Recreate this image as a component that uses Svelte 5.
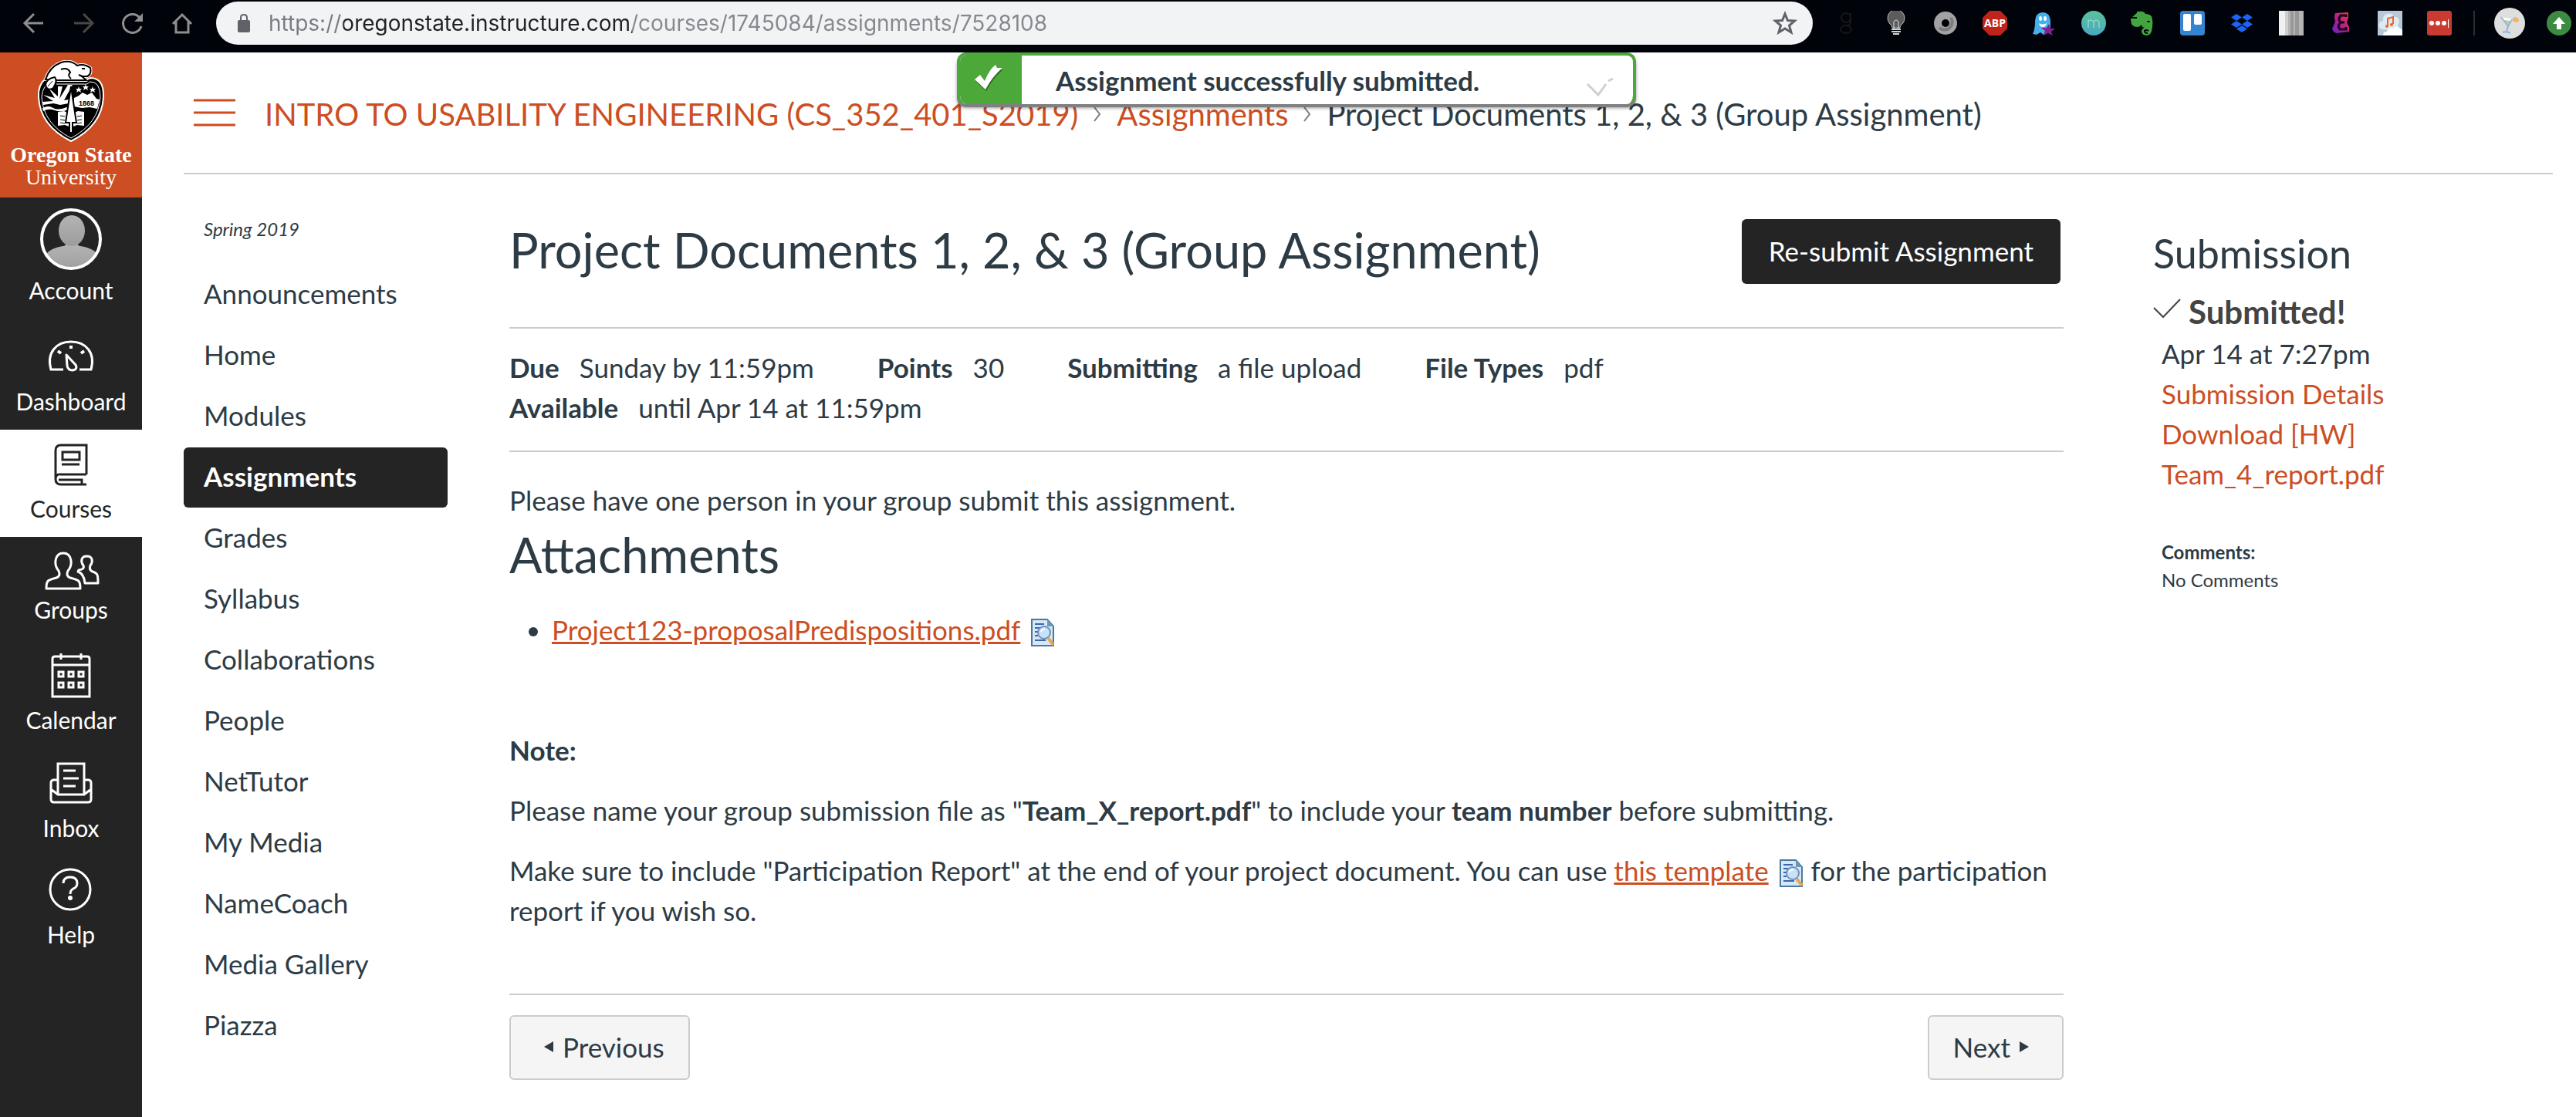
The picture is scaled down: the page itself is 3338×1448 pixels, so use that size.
<script>
  const rail = [
    { key: 'account', label: 'Account', height: 103 },
    { key: 'dashboard', label: 'Dashboard', height: 90 },
    { key: 'courses', label: 'Courses', height: 85, active: true },
    { key: 'groups', label: 'Groups', height: 77 },
    { key: 'calendar', label: 'Calendar', height: 89 },
    { key: 'inbox', label: 'Inbox', height: 86 },
    { key: 'help', label: 'Help', height: 84 }
  ];

  const courseLinks = [
    'Announcements', 'Home', 'Modules', 'Assignments', 'Grades', 'Syllabus', 'Collaborations',
    'People', 'NetTutor', 'My Media', 'NameCoach', 'Media Gallery', 'Piazza'
  ];

  const details = [
    ['Due', 'Sunday by 11:59pm'],
    ['Points', '30'],
    ['Submitting', 'a file upload'],
    ['File Types', 'pdf'],
    ['Available', 'until Apr 14 at 11:59pm']
  ];

  const extensions = [
    'goodreads', 'bulb', 'ring', 'abp', 'ghost', 'mendeley', 'elephant',
    'board', 'dropbox', 'bars', 'letter', 'cloud', 'dots'
  ];

  let url = $state('https://oregonstate.instructure.com/courses/1745084/assignments/7528108');
</script>

{#snippet railIcon(item)}
  <svg width="184" height={item.height} viewBox="0 0 184 {item.height}" fill="none" stroke="currentColor" stroke-width="3" aria-hidden="true">
    {#if item.key === 'account'}
      <defs>
        <clipPath id="avatar"><circle cx="92" cy="54" r="37" /></clipPath>
        <linearGradient id="avatar-fill" x1="0" y1="0" x2="0" y2="1">
          <stop offset="0" stop-color="#b4b4b4" /><stop offset="1" stop-color="#9c9c9c" />
        </linearGradient>
      </defs>
      <g clip-path="url(#avatar)" stroke="none" fill="url(#avatar-fill)">
        <path d="M60 100V74q4-8 22-11q4-1 4-4h14q0 3 4 4q18 3 22 11v26z" />
        <ellipse cx="93" cy="43" rx="17" ry="20" />
      </g>
      <circle cx="92" cy="54" r="38" stroke-width="4" />
    {:else if item.key === 'dashboard'}
      <path d="M82 66H66C60 44 73 30 92 30s32 14 26 36h-15" />
      <path d="M86 47l12 13q3 6-4 7q-6 0-7-6z" stroke-linejoin="round" />
      <path d="M92 35v4M75 42l4 3M109 42l-4 3" stroke-width="4" />
    {:else if item.key === 'courses'}
      <path d="M112 58V20H79q-7 0-7 7v36M112 71H79q-7 0-7-7t7-6h33M76 65h30v5" />
      <path d="M81 29h22v10H81zM80 45h23" />
    {:else if item.key === 'groups'}
      <path d="M60 67c0-10 1-11 13-14q6-2 3-9c-7-8-5-23 6-23s13 15 6 23q-3 7 3 9c12 3 13 4 13 14z" stroke-linejoin="round" />
      <path d="M102 43q8-1 6-6c-4-5-3-12 4.500-12s8.500 7 4.500 12q-2 6 3 8c7 2 7 5 7 15h-17q-1-12-9-15z" stroke-linejoin="round" />
    {:else if item.key === 'calendar'}
      <path d="M68 76V27q0-3 3-3h42q3 0 3 3v49zM68 35h48M79 20v8M105 20v8" />
      <path d="M76 44h6v6h-6zM89 44h6v6h-6zM102 44h6v6h-6zM76 58h6v6h-6zM89 58h6v6h-6zM102 58h6v6h-6z" />
    {:else if item.key === 'inbox'}
      <path d="M75 60V20h34v40M75 41h-5q-4 0-4 4v21q0 4 4 4h44q4 0 4-4V45q0-4-4-4h-5M66 53l9 7h34l9-7" />
      <path d="M82 29h16M82 39h20M82 49h16" />
    {:else}
      <circle cx="91" cy="43" r="26" />
      <path d="M82 35q0-8 9-8t9 8q0 5-5 7q-4 2-4 7" />
      <circle cx="91" cy="54" r="3" fill="currentColor" stroke="none" />
    {/if}
  </svg>
{/snippet}

{#snippet extensionIcon(name)}
  <svg width="32" height="32" viewBox="0 0 32 32" aria-hidden="true">
    {#if name === 'goodreads'}
      <g fill="none" stroke="#16171a" stroke-width="2"><circle cx="15" cy="9" r="6" /><ellipse cx="15" cy="24" rx="7" ry="5" /><path d="M21 3v12q0 4-7 4" /></g>
    {:else if name === 'bulb'}
      <path d="M11 22q0-3-3-5a11 11 0 1 1 16 0q-3 2-3 5z" fill="#5c5c5c" stroke="#bdbdbd" />
      <path d="M13 23V14q3-4 6 0v9" fill="none" stroke="#e4e4e4" />
      <path d="M10 24h12M10 27h12M12 30h8" fill="none" stroke="#d4d4d4" stroke-width="2" />
    {:else if name === 'ring'}
      <circle cx="16" cy="16" r="10" fill="none" stroke="#a2a2a2" stroke-width="10" />
      <path d="M23 9a10 10 0 0 1-15 13" fill="none" stroke="#7c7c7c" stroke-width="4" />
    {:else if name === 'abp'}
      <path d="M9 0h14l9 9v14l-9 9H9l-9-9V9z" fill="#bf2418" />
      <text x="16" y="21" text-anchor="middle" class="abp">ABP</text>
    {:else if name === 'ghost'}
      <path d="M1 30Q4 25 4 13 5 2 14 2t10 11v17l-5-2-4 3-4-3-5 3z" fill="#45b0ee" />
      <ellipse cx="11" cy="10" rx="2" ry="3" fill="#fff" /><ellipse cx="17" cy="10" rx="2" ry="3" fill="#fff" />
      <path d="M9 16q5 3 10 0-1 5-5 5t-5-5z" fill="#fff" />
      <path d="M22 17l2 6 6 0-5 4 2 5-6-3-6 3 2-6-5-4h7z" fill="#81208f" />
    {:else if name === 'mendeley'}
      <defs><linearGradient id="teal" x1="0" y1="0" x2="0" y2="1"><stop offset="0" stop-color="#5bc29a" /><stop offset="1" stop-color="#48a9c2" /></linearGradient></defs>
      <circle cx="16" cy="16" r="16" fill="url(#teal)" />
      <path d="M9 22V11M9 14q3-4 7 0v8M16 14q4-4 7 0v8" fill="none" stroke="#b4e2dc" />
    {:else if name === 'elephant'}
      <path d="M11 1q6-1 8 3 5 0 8 3 2 6 1 14-1 11-7 11t-7-5q0-4 4-5l-3-1q-1-2-1-3-2 3-5 3-6 0-8-4-1-4-1-7h8V1z" fill="#43a441" />
      <path d="M9 2v6H2z" fill="#43a441" />
      <path d="M23 26q-3-2-5 0 0 3 4 3" fill="none" stroke="#01030a" stroke-width="2" /><ellipse cx="23" cy="14" rx="2" ry="1" fill="#01030a" />
    {:else if name === 'board'}
      <rect width="32" height="32" rx="4" fill="#3484cf" /><rect x="4" y="4" width="10" height="22" rx="2" fill="#fff" /><rect x="18" y="4" width="10" height="14" rx="2" fill="#fff" />
    {:else if name === 'dropbox'}
      <path d="M9 4l7 4.500L9 13 2 8.500zM23 4l7 4.500-7 4.500-7-4.500zM9 13l7 4.500L9 22l-7-4.500zM23 13l7 4.500-7 4.500-7-4.500zM16 19l7 4.500-7 4.500-7-4.500z" fill="#1d64f2" />
    {:else if name === 'bars'}
      <rect width="32" height="32" fill="#b5b5b5" /><path d="M0 0h8v32H0z" fill="#f0f0f0" /><path d="M8 0h4v32H8z" fill="#cfcfcf" /><path d="M15 0h4v32h-4zM21 0h5v32h-5z" fill="#989898" />
    {:else if name === 'letter'}
      <defs><linearGradient id="berry" x1="0" y1="1" x2="1" y2="0"><stop offset="0" stop-color="#6a1fd0" /><stop offset=".5" stop-color="#b51f8a" /><stop offset="1" stop-color="#f03a3a" /></linearGradient></defs>
      <path d="M9 3l17-1v7l-2 6 3 6v6l-16 2q-5-1-6-6l4-9q-2-7 0-11z" fill="url(#berry)" />
      <path d="M23 8V6h-7q-4 5 0 9-5 5-1 9h8v-3M16 15h5" fill="none" stroke="#14061a" stroke-width="3" />
    {:else if name === 'cloud'}
      <rect width="32" height="32" fill="#b7c9d6" />
      <path d="M6 24q-6-2-4-8 2-3 5-3-1-7 5-9 7-2 9 4 6-1 7 5 0 3-2 5 3 5-3 7z" fill="#dfe9f1" />
      <path d="M7 32q0-5 5-5 2-6 8-4 4-5 8-1l4 3v7z" fill="#fff" />
      <path d="M13 20V10l7-2v9" fill="none" stroke="#e9662d" stroke-width="2" /><circle cx="12" cy="20" r="2" fill="#e9662d" /><circle cx="18" cy="18" r="2" fill="#e9662d" />
    {:else}
      <rect width="32" height="32" rx="3" fill="#c93a30" /><circle cx="6" cy="16" r="3" fill="#fff" /><circle cx="14" cy="16" r="3" fill="#fff" /><circle cx="22" cy="16" r="3" fill="#fff" /><path d="M27 11h1v11h-1z" fill="#fff" />
    {/if}
  </svg>
{/snippet}

{#snippet preview()}
  <button class="preview" aria-label="Preview document">
    <svg width="32" height="36" viewBox="0 0 32 36" aria-hidden="true">
      <path d="M1 1h20l8 9v25H1z" fill="#d5e8f7" stroke="#4a789e" stroke-width="2" />
      <path d="M21 1v9h8z" fill="#6d98b8" />
      <path d="M5 7h12M5 12h8M5 17h4M5 22h4M5 28h14" stroke="#3d65ad" stroke-width="2" />
      <circle cx="17" cy="18" r="8" fill="#c6e2fa" stroke="#7191b5" stroke-width="2" />
      <path d="M13 17q1-4 5-3" stroke="#fff" stroke-width="2" fill="none" />
      <path d="M22 25l7 9" stroke="#e8a752" stroke-width="4" />
    </svg>
  </button>
{/snippet}

<header class="browser">
  <div class="controls">
    <button aria-label="Back"><svg width="32" height="32" viewBox="0 0 32 32"><path d="M28 16H4M16 4L4 16l12 12" /></svg></button>
    <button class="dim" aria-label="Forward"><svg width="32" height="32" viewBox="0 0 32 32"><path d="M4 16h24M16 4l12 12-12 12" /></svg></button>
    <button aria-label="Reload"><svg width="32" height="32" viewBox="0 0 32 32"><path d="M27 20a12 12 0 1 1-2-11" /><path d="M29 3v11H18z" class="solid" /></svg></button>
    <button aria-label="Home page"><svg width="32" height="32" viewBox="0 0 32 32"><path d="M4 17L16 5l12 12M8 14v14h16V14" /></svg></button>
  </div>
  <div class="address">
    <svg width="18" height="32" viewBox="0 0 18 32" aria-hidden="true"><rect x="1" y="12" width="16" height="16" rx="2" fill="#5f6368" /><path d="M5 13V9q0-4 4-4t4 4v4" fill="none" stroke="#5f6368" stroke-width="2" /></svg>
    <input type="text" aria-label="Address" bind:value={url} />
    <button aria-label="Bookmark this page"><svg width="32" height="32" viewBox="0 0 32 32"><path d="M16 4l3.500 8.500 9 .5-7 6 2.500 9-8-5-8 5 2.500-9-7-6 9-.5z" fill="none" stroke="#5f6368" stroke-width="3" /></svg></button>
  </div>
  <div class="extensions">
    {#each extensions as name}
      <button aria-label={name}>{@render extensionIcon(name)}</button>
    {/each}
  </div>
  <span class="divider"></span>
  <button class="profile" aria-label="Profile">
    <svg width="40" height="40" viewBox="0 0 40 40"><circle cx="20" cy="20" r="20" fill="#dedede" /><path d="M10 13l13 2-5 9zM18 23l-2 9" fill="#b4d99a" stroke="#8fb6dc" stroke-width="2" /><path d="M11 32q5-2 10 1" fill="none" stroke="#8fb6dc" stroke-width="2" /><path d="M10 12l13 2-2 3-8-1z" fill="#fff" /><path d="M26 12q6 0 6 6-6 2-8-1z" fill="#f2b25e" /></svg>
  </button>
  <button class="update" aria-label="Update">
    <svg width="32" height="32" viewBox="0 0 32 32"><circle cx="16" cy="16" r="16" fill="#3d8b42" /><path d="M16 8l8 9h-5v7h-6v-7H8z" fill="#fff" /></svg>
  </button>
</header>

<div class="app">
  <nav class="rail" aria-label="Global navigation">
    <a class="logo" href="#home">
      <svg width="92" height="108" viewBox="0 0 92 108" aria-hidden="true">
        <path d="M13 24Q3 32 4 48q2 37 42 57 40-20 42-57 1-25-17-25l-7 3H18z" fill="#000" stroke="#fff" stroke-width="2" />
        <path d="M13 33q-5 7-5 15 2 34 38 53 36-19 38-53 0-21-14-20-2 4-8 3H27" fill="none" stroke="#fff" />
        <path d="M9 54l14-1-13-8 15 4-8-13 12 11V34h6l-4 16 11-18h6L37 52l6-1v5l-11 2-9-2-13 2zM9 62q8-4 14 0t20-2v4q-10 4-18 1-8-3-15 1z" fill="#fff" />
        <path d="M50 60V49l6-3 5-4 6 3 6-3 6 8 4 1-3 12-10-2-10 1z" fill="#fff" />
        <path d="M56 34l1 3h3l-2 2 1 3-3-2-3 2 1-3-2-2h3zM65 31l1 3h3l-2 2 1 3-3-2-3 2 1-3-2-2h3zM74 34l1 3h3l-2 2 1 3-3-2-3 2 1-3-2-2h3z" fill="#fff" />
        <path d="M29 67l8-1 9 4 9-4 8 1v18l-9-1-8 3-8-3-9 1z" fill="#fff" />
        <path d="M32 72l6 1M32 77l6 1M32 81l6 1M54 73l6-1M54 78l6-1M54 82l6-1" stroke="#000" />
        <path d="M46 34l-7 47h5v13h4V81h5z" fill="#fff" stroke="#000" stroke-width="2" />
        <path d="M13 25Q18 9 33 3q13-4 21 4 9-3 17 3 2 8-4 11h-7l6 5H25z" fill="#fff" stroke="#fff" stroke-width="4" stroke-linejoin="round" />
        <path d="M13 25Q18 9 33 3q13-4 21 4 9-3 17 3 2 8-4 11h-7l6 5H25z" fill="#fff" stroke="#000" stroke-width="2" />
        <path d="M33 12q9-3 12 4-4 4 1 8M60 11h4M56 19l5 2" fill="none" stroke="#000" stroke-width="2" />
        <path d="M13 32q1-8 12-10 4 5-2 14-8 5-10-4z" fill="#fff" stroke="#000" stroke-width="2" /><path d="M16 34l6-7" stroke="#000" />
        <text x="66" y="59" text-anchor="middle" class="year">1868</text>
      </svg>
      <strong>Oregon State</strong>
      <span>University</span>
    </a>
    {#each rail as item}
      <a class="rail-item" class:active={item.active} href="#{item.key}">
        {@render railIcon(item)}
        <span>{item.label}</span>
      </a>
    {/each}
  </nav>

  <div class="page">
    <div class="crumbs">
      <button class="menu" aria-label="Toggle course navigation"><svg width="54" height="36" viewBox="0 0 54 36"><path d="M0 2h54M0 18h54M0 34h54" stroke="#d14b20" stroke-width="3" /></svg></button>
      <nav aria-label="Breadcrumb">
        <a href="#course">INTRO TO USABILITY ENGINEERING (CS_352_401_S2019)</a>
        <svg width="10" height="20" viewBox="0 0 10 20" aria-hidden="true"><path d="M1 1l7 9-7 9" /></svg>
        <a href="#assignments">Assignments</a>
        <svg width="10" height="20" viewBox="0 0 10 20" aria-hidden="true"><path d="M1 1l7 9-7 9" /></svg>
        <span>Project Documents 1, 2, &amp; 3 (Group Assignment)</span>
      </nav>
    </div>

    <div class="columns">
      <nav class="course-nav" aria-label="Course navigation">
        <em>Spring 2019</em>
        {#each courseLinks as link}
          <a href="#{link}" class:current={link === 'Assignments'}>{link}</a>
        {/each}
      </nav>

      <main>
        <div class="title-row">
          <h1>Project Documents 1, 2, &amp; 3 (Group Assignment)</h1>
          <button class="primary">Re-submit Assignment</button>
        </div>

        <dl>
          {#each details as [term, value]}
            <div><dt>{term}</dt><dd>{value}</dd></div>
          {/each}
        </dl>

        <article>
          <p>Please have one person in your group submit this assignment.</p>
          <h2>Attachments</h2>
          <ul>
            <li><a href="#pdf">Project123-proposalPredispositions.pdf</a>{@render preview()}</li>
          </ul>
          <p class="para"><strong>Note:</strong></p>
          <p class="para">Please name your group submission file as "<strong>Team_X_report.pdf</strong>" to include your <strong>team number</strong> before submitting.</p>
          <p class="para">Make sure to include "Participation Report" at the end of your project document. You can use <a href="#template">this template</a>{@render preview()} for the participation report if you wish so.</p>
        </article>

        <footer>
          <button class="step"><svg width="12" height="14" viewBox="0 0 12 14" aria-hidden="true"><path d="M12 0v14L0 7z" /></svg>Previous</button>
          <button class="step next">Next<svg width="12" height="14" viewBox="0 0 12 14" aria-hidden="true"><path d="M0 0v14l12-7z" /></svg></button>
        </footer>
      </main>

      <aside>
        <h2>Submission</h2>
        <h3><svg width="36" height="26" viewBox="0 0 36 26" aria-hidden="true"><path d="M1 12l12 12L35 1" /></svg>Submitted!</h3>
        <div class="submission">
          <span>Apr 14 at 7:27pm</span>
          <a href="#details">Submission Details</a>
          <a href="#download">Download [HW]<br />Team_4_report.pdf</a>
        </div>
        <div class="comments">
          <strong>Comments:</strong>
          <span>No Comments</span>
        </div>
      </aside>
    </div>
  </div>

  <div class="toast-layer">
    <div class="toast" role="status">
      <span class="tick"><svg width="42" height="38" viewBox="0 0 42 38" aria-hidden="true"><path d="M4 22l7-6 6 8Q23 9 31 3l2 4 7 0Q27 18 18 35z" fill="#2f6f1c" /><path d="M3 20l7-6 6 8Q22 7 30 1l2 4 7 0Q26 16 17 33z" fill="#fff" /></svg></span>
      <strong>Assignment successfully submitted.</strong>
      <svg class="fading" width="36" height="34" viewBox="0 0 36 34" aria-hidden="true"><path d="M1 18l14 14 10-14M28 14l6-3" /></svg>
    </div>
  </div>
</div>

<style>
  :global(body) {
    margin: 0;
    background: #fff;
  }
  :global(#app) {
    min-height: 100vh;
    display: flex;
    flex-direction: column;
    font-family: Lato, 'Liberation Sans', sans-serif;
    font-size: 35px;
    line-height: 52px;
    color: #2d3b45;
  }
  button {
    padding: 0;
    border: 0;
    background: none;
    font: inherit;
    color: inherit;
    cursor: pointer;
  }
  svg {
    display: block;
    flex: none;
  }
  a {
    color: #cc4e22;
    text-decoration: none;
  }
  h1, h2, h3, p, ul, dl, dd {
    margin: 0;
    padding: 0;
    font-weight: 400;
  }

  .browser {
    display: flex;
    align-items: center;
    height: 60px;
    padding-bottom: 8px;
    background: #01030a;
    overflow: hidden;
  }
  .controls {
    display: flex;
    gap: 32px;
    padding: 0 28px;
    color: #8e8e8e;
  }
  .controls .dim {
    color: #484848;
  }
  .controls path {
    fill: none;
    stroke: currentColor;
    stroke-width: 3;
  }
  .controls .solid {
    fill: currentColor;
    stroke: none;
  }
  .address {
    flex: 1;
    display: flex;
    align-items: center;
    height: 56px;
    border-radius: 28px;
    background: #f1f3f5;
    padding: 0 20px 0 27px;
  }
  .address input {
    flex: 1;
    min-width: 0;
    margin-left: 23px;
    padding: 0;
    border: 0;
    outline: 0;
    font-family: Inter, 'Liberation Sans', sans-serif;
    font-size: 28px;
    line-height: 40px;
    color: transparent;
    /* protocol and path are muted, the host is dark */
    background: linear-gradient(90deg, #777b80 97px, #202124 97px 471px, #85898d 471px);
    -webkit-background-clip: text;
    background-clip: text;
  }
  .extensions {
    display: flex;
    gap: 32px;
    padding: 0 28px;
  }
  .abp {
    font: 700 14px 'Open Sans', sans-serif;
    fill: #fff;
  }
  .divider {
    width: 2px;
    height: 32px;
    background: #2c2e34;
  }
  .profile {
    margin: 0 28px 0 25px;
  }
  .update {
    margin-right: 6px;
  }

  .app {
    position: relative;
    flex: 1;
    display: flex;
  }
  .rail {
    width: 184px;
    background: #242424;
  }
  .logo {
    display: flex;
    flex-direction: column;
    align-items: center;
    height: 178px;
    padding-top: 10px;
    background: #cc4e22;
    color: #fff;
    font: 28px 'Liberation Serif', serif;
    line-height: 29px;
    white-space: nowrap;
  }
  .year {
    font: 700 9px 'Liberation Sans', sans-serif;
  }
  .rail-item {
    display: block;
    padding-bottom: 20px;
    color: #fff;
    font-size: 30px;
    line-height: 34px;
    text-align: center;
  }
  .rail-item span {
    display: block;
  }
  .rail-item.active {
    background: #fff;
    color: #242424;
  }

  .page {
    flex: 1;
    min-width: 0;
    padding: 0 30px 48px 54px;
  }
  .crumbs {
    display: flex;
    align-items: center;
    height: 156px;
    padding-left: 13px;
    border-bottom: 2px solid #c7cdd1;
  }
  .menu {
    margin-right: 38px;
  }
  .crumbs nav {
    display: flex;
    align-items: center;
    gap: 20px;
    padding-top: 4px;
    font-size: 40px;
    white-space: nowrap;
  }
  .crumbs nav path {
    fill: none;
    stroke: #7a7a7a;
    stroke-width: 2;
  }

  .columns {
    display: flex;
  }
  .course-nav {
    flex: none;
    width: 342px;
    margin-right: 80px;
    padding-top: 56px;
  }
  .course-nav em {
    display: block;
    margin: 0 26px 31px;
    font-size: 24px;
    line-height: 30px;
  }
  .course-nav a {
    display: block;
    margin-bottom: 1px;
    padding: 0 26px 4px;
    border-radius: 6px;
    color: #2d3b45;
    line-height: 74px;
  }
  .course-nav .current {
    background: #242424;
    color: #fff;
    font-weight: 700;
  }

  main {
    flex: 1;
    min-width: 0;
    padding-top: 58px;
  }
  .title-row {
    display: flex;
    justify-content: space-between;
    padding: 0 4px 56px 0;
    border-bottom: 2px solid #c7cdd1;
  }
  h1 {
    font-size: 63px;
    line-height: 80px;
  }
  .primary {
    height: 84px;
    padding: 0 35px 3px;
    border-radius: 6px;
    background: #242424;
    color: #fff;
    white-space: nowrap;
  }
  dl {
    display: flex;
    flex-wrap: wrap;
    column-gap: 82px;
    padding: 24px 0 30px;
    border-bottom: 2px solid #c7cdd1;
  }
  dl div {
    display: flex;
    gap: 26px;
  }
  dt {
    font-weight: 700;
  }
  article {
    padding: 36px 0 82px;
    border-bottom: 2px solid #c7cdd1;
  }
  article h2 {
    margin-bottom: 26px;
    font-size: 63px;
    line-height: 90px;
  }
  article a {
    text-decoration: underline;
  }
  ul {
    margin-bottom: 104px;
    padding-left: 55px;
  }
  .para + .para {
    margin-top: 26px;
  }
  .preview {
    margin: 0 10px 0 14px;
    vertical-align: -8px;
    line-height: 0;
  }
  .para .preview {
    margin-right: 0;
  }
  footer {
    display: flex;
    justify-content: space-between;
    padding-top: 26px;
  }
  .step {
    display: flex;
    align-items: center;
    gap: 12px;
    box-sizing: border-box;
    height: 84px;
    padding: 0 31px 3px 43px;
    border: 2px solid #c7cdd1;
    border-radius: 6px;
    background: #f5f5f5;
  }
  .step.next {
    padding: 0 43px 3px 31px;
  }
  .step path {
    fill: #2d3b45;
  }

  aside {
    flex: none;
    width: 518px;
    margin-left: 116px;
    padding-top: 72px;
  }
  aside h2 {
    margin-bottom: 20px;
    font-size: 52px;
    line-height: 60px;
  }
  aside h3 {
    display: flex;
    gap: 10px;
    padding-bottom: 2px;
    font-size: 42px;
    font-weight: 700;
    color: #444;
  }
  aside h3 svg {
    margin-top: 9px;
  }
  aside path {
    fill: none;
    stroke: #444;
    stroke-width: 2;
  }
  .submission, .comments {
    display: flex;
    flex-direction: column;
    padding-left: 11px;
  }
  .comments {
    margin-top: 58px;
    font-size: 24px;
    line-height: 36px;
  }

  .toast-layer {
    position: absolute;
    top: 0;
    left: 0;
    right: 0;
    display: flex;
    justify-content: center;
    padding-left: 22px;
    pointer-events: none;
  }
  .toast {
    display: flex;
    align-items: center;
    box-sizing: border-box;
    width: 880px;
    height: 67px;
    border: 4px solid #4da83a;
    border-bottom: 0;
    border-radius: 12px;
    background: #fff;
    box-shadow: 0 4px 0 #808080, 0 5px 4px rgba(0, 0, 0, 0.4);
    overflow: hidden;
  }
  .tick {
    display: flex;
    align-items: center;
    align-self: stretch;
    width: 80px;
    padding: 0 0 4px 16px;
    box-sizing: border-box;
    background: #4da83a;
  }
  .toast strong {
    flex: 1;
    padding-left: 44px;
    line-height: 52px;
  }
  .fading {
    margin: 8px 24px 0 0;
  }
  .fading path {
    fill: none;
    stroke: #cfcfcf;
    stroke-width: 3;
  }
</style>
